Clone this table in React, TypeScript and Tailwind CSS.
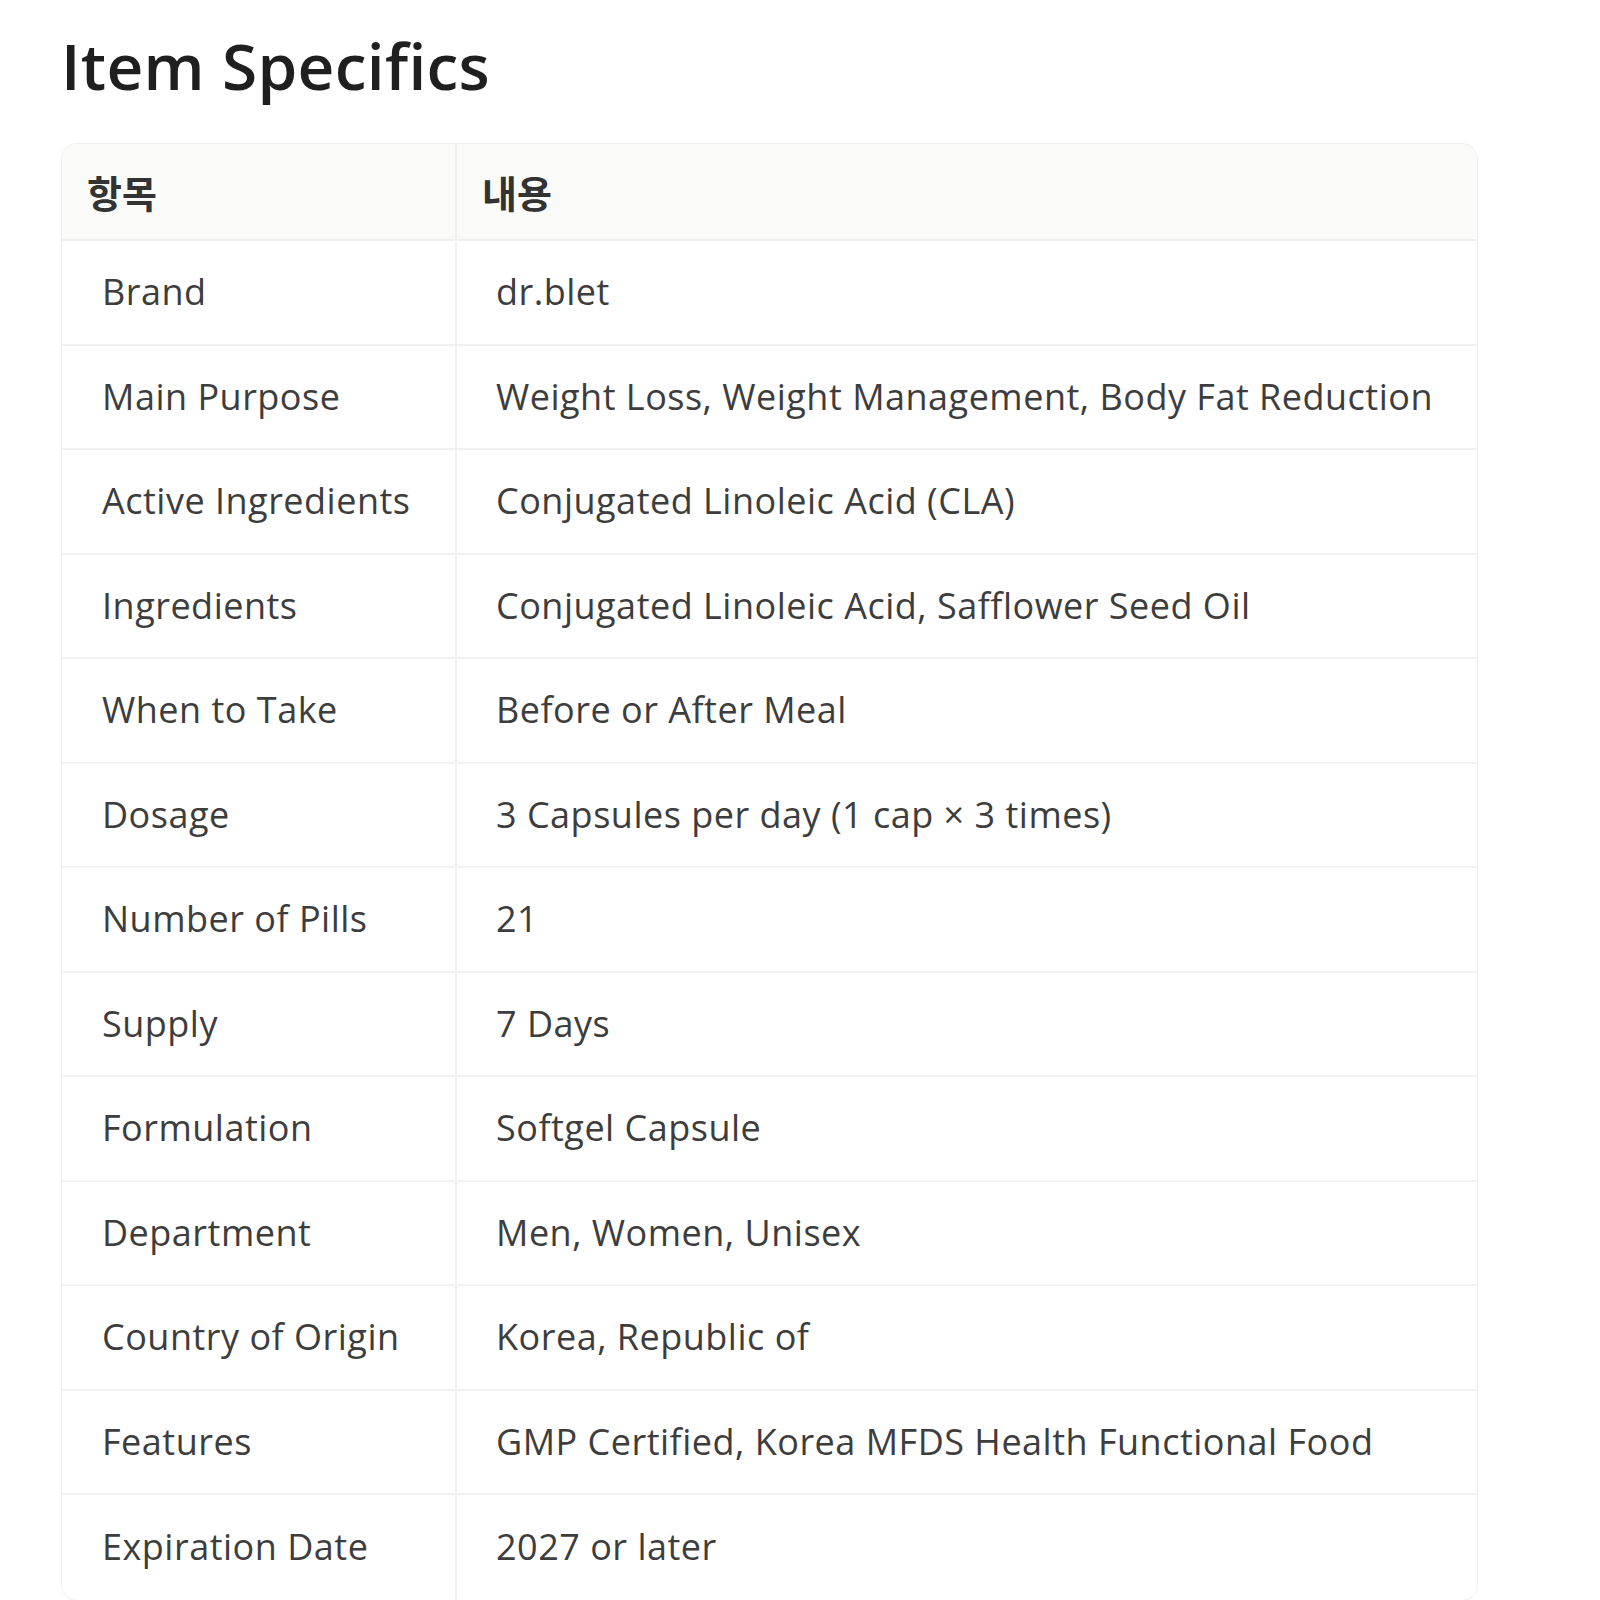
const rows: [string, string][] = [
  ["Brand", "dr.blet"],
  ["Main Purpose", "Weight Loss, Weight Management, Body Fat Reduction"],
  ["Active Ingredients", "Conjugated Linoleic Acid (CLA)"],
  ["Ingredients", "Conjugated Linoleic Acid, Safflower Seed Oil"],
  ["When to Take", "Before or After Meal"],
  ["Dosage", "3 Capsules per day (1 cap × 3 times)"],
  ["Number of Pills", "21"],
  ["Supply", "7 Days"],
  ["Formulation", "Softgel Capsule"],
  ["Department", "Men, Women, Unisex"],
  ["Country of Origin", "Korea, Republic of"],
  ["Features", "GMP Certified, Korea MFDS Health Functional Food"],
  ["Expiration Date", "2027 or later"],
]

function App() {
  return (
    <div className="min-h-[1600px] bg-white pl-[61px] pt-[26px] font-['Open_Sans','Noto_Sans_CJK_KR',sans-serif] text-[#3d3d3d] [font-variant-ligatures:none]">
      <h1 className="text-[64px] font-semibold leading-[80px] tracking-[0.3px] text-[#1f1f1f]">Item Specifics</h1>

      <div className="mt-[37px] w-[1417px] overflow-hidden rounded-[16px] border border-[#efefef]">
        <div className="grid grid-cols-[395px_1fr] h-[97px] bg-[#fafaf9] border-b-2 border-[#eeeeee]">
          <div className="flex items-center pl-[25px] border-r-2 border-[#eeeeee] text-[38px] font-bold text-[#333] font-['Noto_Sans_CJK_KR',sans-serif]">
            항목
          </div>
          <div className="flex items-center pl-[25px] text-[38px] font-bold text-[#333] font-['Noto_Sans_CJK_KR',sans-serif]">
            내용
          </div>
        </div>

        {rows.map(([label, value], i) => (
          <div
            key={label}
            className={
              "grid grid-cols-[395px_1fr] h-[104.5px] " +
              (i < rows.length - 1 ? "border-b-2 border-[#f1f1f0]" : "")
            }
          >
            <div className="flex items-center pl-[40px] border-r-2 border-[#f1f1f0] text-[36px] tracking-[0.5px]">
              {label}
            </div>
            <div className="flex items-center pl-[39px] text-[36px] tracking-[0.5px]">{value}</div>
          </div>
        ))}
      </div>
    </div>
  )
}

export default App
